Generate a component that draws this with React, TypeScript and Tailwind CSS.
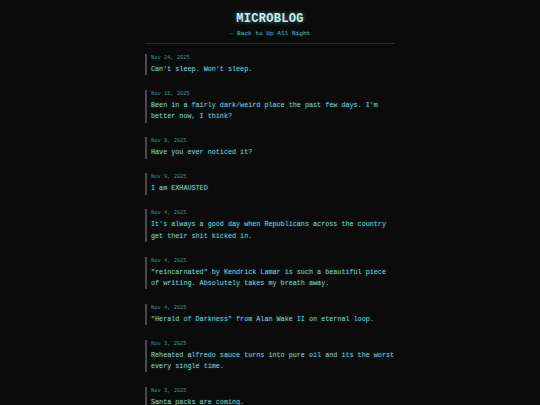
const posts = [
  { date: "Nov 24, 2025", text: "Can't sleep. Won't sleep." },
  { date: "Nov 16, 2025", text: "Been in a fairly dark/weird place the past few days. I'm better now, I think?" },
  { date: "Nov 9, 2025", text: "Have you ever noticed it?" },
  { date: "Nov 9, 2025", text: "I am EXHAUSTED" },
  { date: "Nov 4, 2025", text: "It's always a good day when Republicans across the country get their shit kicked in." },
  { date: "Nov 4, 2025", text: "\"reincarnated\" by Kendrick Lamar is such a beautiful piece of writing. Absolutely takes my breath away." },
  { date: "Nov 4, 2025", text: "\"Herald of Darkness\" from Alan Wake II on eternal loop." },
  { date: "Nov 3, 2025", text: "Reheated alfredo sauce turns into pure oil and its the worst every single time." },
  { date: "Nov 3, 2025", text: "Santa packs are coming." },
];

export default function App() {
  return (
    <div className="min-h-screen bg-[#0b0b0b] font-['Liberation_Mono',monospace]">
      <div className="mx-auto w-[250px] pt-[12px]">
        {/* Cabecera */}
        <header className="text-center">
          <h1 className="text-[12px] leading-[14px] font-bold tracking-[0.3px] text-[#c9ecec] [text-shadow:0_0_4px_rgba(120,230,230,0.6)]">
            MICROBLOG
          </h1>
          <a className="mt-[3px] block text-[6.1px] leading-[10px] text-[#4fb3c2] [text-shadow:0_0_3px_rgba(80,200,210,0.4)]">
            ← Back to Up All Night
          </a>
        </header>
        <hr className="mt-[4px] border-t border-[#2a2a2a]" />

        {/* Entradas */}
        <div className="mt-[10px] flex flex-col gap-[14.75px]">
          {posts.map((p, i) => (
            <div key={i} className="border-l-2 border-[#4a4a4a] pl-[4px]">
              <div className="text-[5.4px] leading-[8px] text-[#438f92]">{p.date}</div>
              <p className="mt-[2px] text-[6.75px] leading-[11.25px] text-[#7fd0d2] [text-shadow:0_0_3px_rgba(100,220,220,0.35)]">
                {p.text}
              </p>
            </div>
          ))}
        </div>
      </div>
    </div>
  );
}
